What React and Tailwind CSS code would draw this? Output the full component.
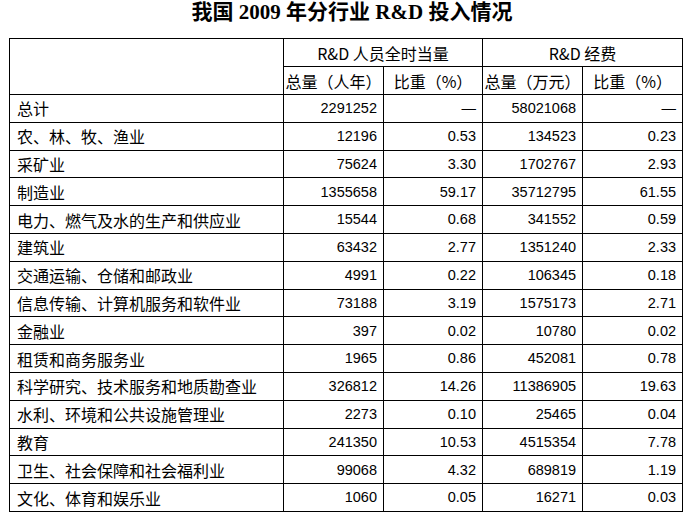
import React from "react";

const rows = [
  ["总计", "2291252", "—", "58021068", "—"],
  ["农、林、牧、渔业", "12196", "0.53", "134523", "0.23"],
  ["采矿业", "75624", "3.30", "1702767", "2.93"],
  ["制造业", "1355658", "59.17", "35712795", "61.55"],
  ["电力、燃气及水的生产和供应业", "15544", "0.68", "341552", "0.59"],
  ["建筑业", "63432", "2.77", "1351240", "2.33"],
  ["交通运输、仓储和邮政业", "4991", "0.22", "106345", "0.18"],
  ["信息传输、计算机服务和软件业", "73188", "3.19", "1575173", "2.71"],
  ["金融业", "397", "0.02", "10780", "0.02"],
  ["租赁和商务服务业", "1965", "0.86", "452081", "0.78"],
  ["科学研究、技术服务和地质勘查业", "326812", "14.26", "11386905", "19.63"],
  ["水利、环境和公共设施管理业", "2273", "0.10", "25465", "0.04"],
  ["教育", "241350", "10.53", "4515354", "7.78"],
  ["卫生、社会保障和社会福利业", "99068", "4.32", "689819", "1.19"],
  ["文化、体育和娱乐业", "1060", "0.05", "16271", "0.03"],
];

const cjk = "font-['Noto_Sans_CJK_SC',sans-serif]";
const num = "font-['Liberation_Sans','Noto_Sans_CJK_SC',sans-serif] text-[14.5px]";

export default function App() {
  return (
    <div className="w-[693px] h-[522px] bg-white text-black">
      <div className="h-[25px] leading-[25px] text-center pl-[11px] mb-[13px] font-['Liberation_Serif','Noto_Sans_CJK_SC',serif] text-[21px] font-bold">
        我国 2009 年分行业 R&amp;D 投入情况
      </div>
      <div className="pl-[9px]">
        <table className={`w-[673px] table-fixed border-collapse border border-black ${cjk} text-[16px]`}>
          <colgroup>
            <col className="w-[274px]" />
            <col className="w-[100px]" />
            <col className="w-[99px]" />
            <col className="w-[100px]" />
            <col className="w-[100px]" />
          </colgroup>
          <thead>
            <tr className="h-[28px]">
              <th rowSpan={2} className="border border-black font-normal"></th>
              <th colSpan={2} className="border border-black font-normal text-center p-0 leading-none">
                R&amp;D 人员全时当量
              </th>
              <th colSpan={2} className="border border-black font-normal text-center p-0 leading-none">
                R&amp;D 经费
              </th>
            </tr>
            <tr className="h-[28px]">
              <th className="border border-black font-normal text-center p-0 leading-none">总量（人年）</th>
              <th className="border border-black font-normal text-center p-0 leading-none">比重（%）</th>
              <th className="border border-black font-normal text-center p-0 leading-none">总量（万元）</th>
              <th className="border border-black font-normal text-center p-0 leading-none">比重（%）</th>
            </tr>
          </thead>
          <tbody>
            {rows.map((r) => (
              <tr key={r[0]} className="h-[27.8px]">
                <td className="border border-black pl-[7px] p-0 leading-none whitespace-nowrap">{r[0]}</td>
                {r.slice(1).map((v, i) => (
                  <td key={i} className={`border border-black text-right pr-[6px] p-0 leading-none ${num}`}>
                    {v}
                  </td>
                ))}
              </tr>
            ))}
          </tbody>
        </table>
      </div>
    </div>
  );
}
